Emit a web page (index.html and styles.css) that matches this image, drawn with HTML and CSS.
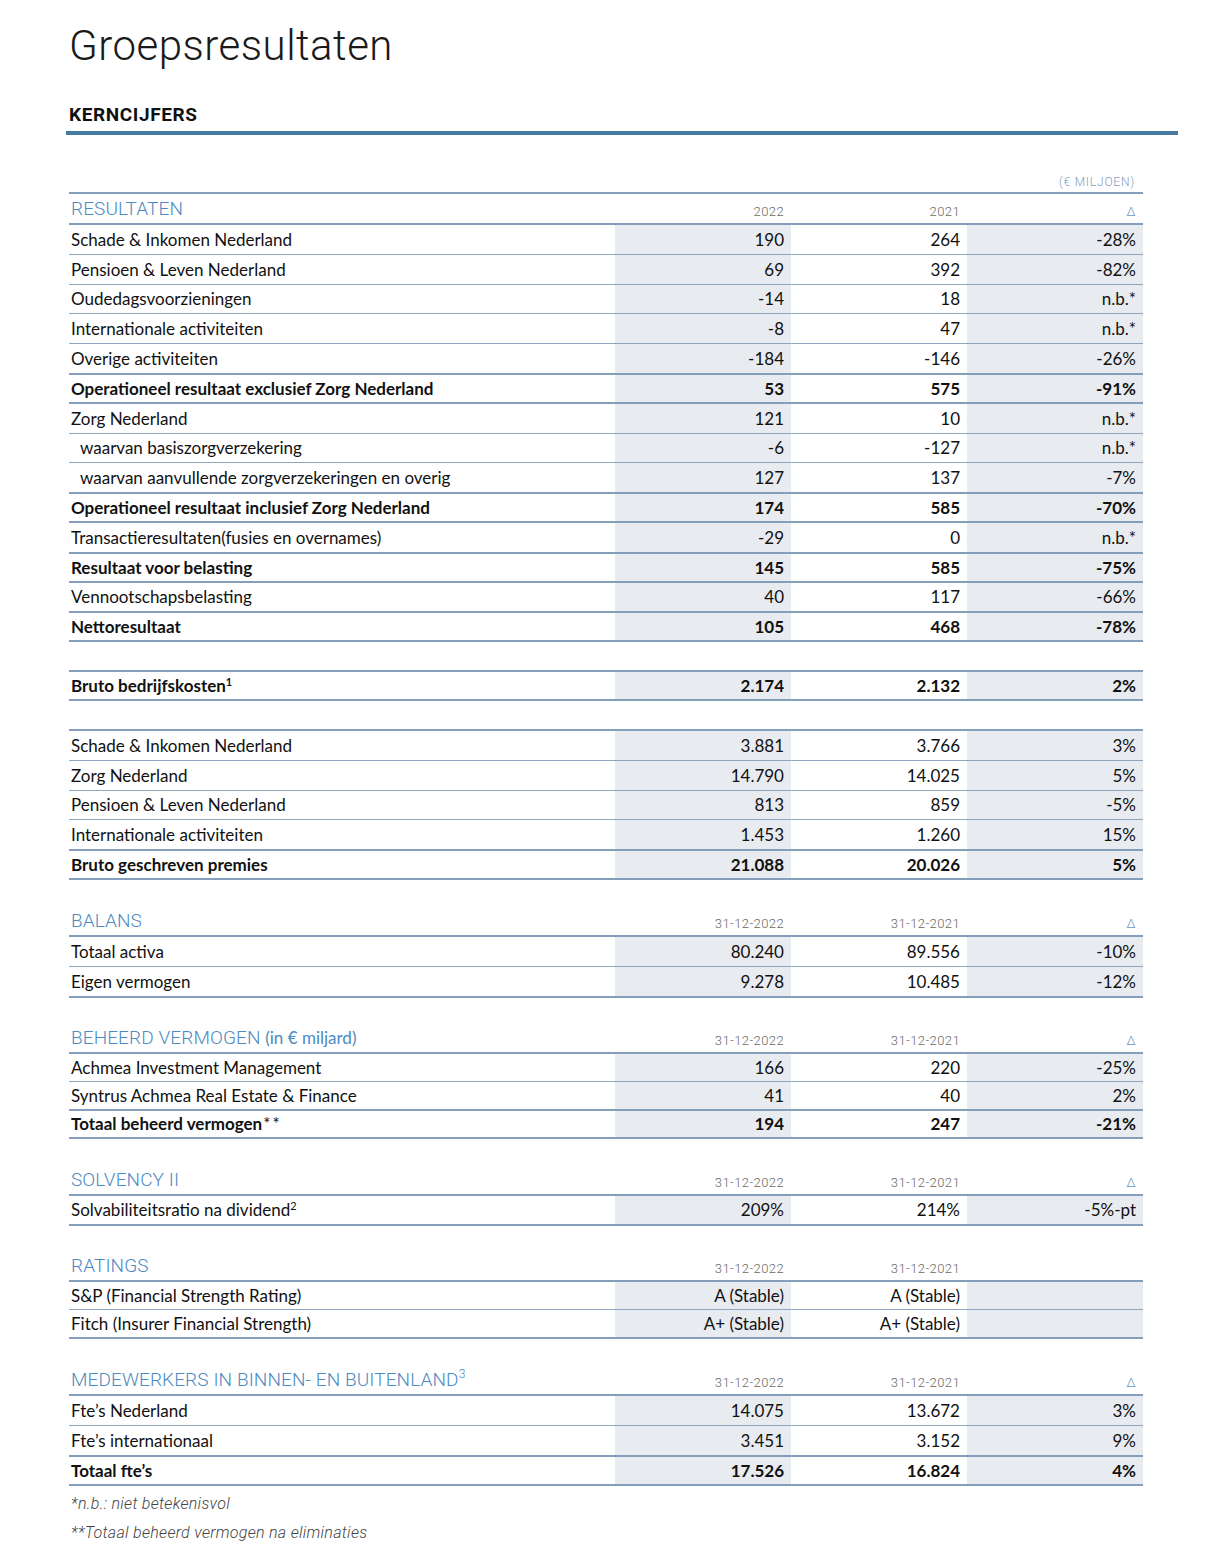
FILE: index.html
```html
<!DOCTYPE html>
<html lang="nl">
<head>
  <meta charset="UTF-8">
  <title>Groepsresultaten</title>
  <link rel="stylesheet" href="styles.css">
</head>
<body>
  <div class="page">
    <h1 class="title">Groepsresultaten</h1>
    <h2 class="subtitle">KERNCIJFERS</h2>
    <div class="bar"></div>

    <div class="unit">(€ MILJOEN)</div>

    <table class="figures first">
      <colgroup><col class="c-label"><col class="c-num"><col class="c-num"><col class="c-num"></colgroup>
      <tr class="head">
        <th class="section">RESULTATEN</th>
        <th class="year">2022</th>
        <th class="year">2021</th>
        <th class="delta">&Delta;</th>
      </tr>
      <tr><td>Schade &amp; Inkomen Nederland</td><td class="num grey">190</td><td class="num">264</td><td class="num grey">-28%</td></tr>
      <tr><td>Pensioen &amp; Leven Nederland</td><td class="num grey">69</td><td class="num">392</td><td class="num grey">-82%</td></tr>
      <tr><td>Oudedagsvoorzieningen</td><td class="num grey">-14</td><td class="num">18</td><td class="num grey">n.b.*</td></tr>
      <tr><td>Internationale activiteiten</td><td class="num grey">-8</td><td class="num">47</td><td class="num grey">n.b.*</td></tr>
      <tr><td>Overige activiteiten</td><td class="num grey">-184</td><td class="num">-146</td><td class="num grey">-26%</td></tr>
      <tr class="total"><td>Operationeel resultaat exclusief Zorg Nederland</td><td class="num grey">53</td><td class="num">575</td><td class="num grey">-91%</td></tr>
      <tr><td>Zorg Nederland</td><td class="num grey">121</td><td class="num">10</td><td class="num grey">n.b.*</td></tr>
      <tr><td class="sub">waarvan basiszorgverzekering</td><td class="num grey">-6</td><td class="num">-127</td><td class="num grey">n.b.*</td></tr>
      <tr><td class="sub">waarvan aanvullende zorgverzekeringen en overig</td><td class="num grey">127</td><td class="num">137</td><td class="num grey">-7%</td></tr>
      <tr class="total"><td>Operationeel resultaat inclusief Zorg Nederland</td><td class="num grey">174</td><td class="num">585</td><td class="num grey">-70%</td></tr>
      <tr><td>Transactieresultaten(fusies en overnames)</td><td class="num grey">-29</td><td class="num">0</td><td class="num grey">n.b.*</td></tr>
      <tr class="total"><td>Resultaat voor belasting</td><td class="num grey">145</td><td class="num">585</td><td class="num grey">-75%</td></tr>
      <tr><td>Vennootschapsbelasting</td><td class="num grey">40</td><td class="num">117</td><td class="num grey">-66%</td></tr>
      <tr class="total last"><td>Nettoresultaat</td><td class="num grey">105</td><td class="num">468</td><td class="num grey">-78%</td></tr>
    </table>

    <table class="figures block">
      <colgroup><col class="c-label"><col class="c-num"><col class="c-num"><col class="c-num"></colgroup>
      <tr class="total"><td>Bruto bedrijfskosten<sup>1</sup></td><td class="num grey">2.174</td><td class="num">2.132</td><td class="num grey">2%</td></tr>
    </table>

    <table class="figures block">
      <colgroup><col class="c-label"><col class="c-num"><col class="c-num"><col class="c-num"></colgroup>
      <tr class="top"><td>Schade &amp; Inkomen Nederland</td><td class="num grey">3.881</td><td class="num">3.766</td><td class="num grey">3%</td></tr>
      <tr><td>Zorg Nederland</td><td class="num grey">14.790</td><td class="num">14.025</td><td class="num grey">5%</td></tr>
      <tr><td>Pensioen &amp; Leven Nederland</td><td class="num grey">813</td><td class="num">859</td><td class="num grey">-5%</td></tr>
      <tr><td>Internationale activiteiten</td><td class="num grey">1.453</td><td class="num">1.260</td><td class="num grey">15%</td></tr>
      <tr class="total last"><td>Bruto geschreven premies</td><td class="num grey">21.088</td><td class="num">20.026</td><td class="num grey">5%</td></tr>
    </table>

    <table class="figures section-table">
      <colgroup><col class="c-label"><col class="c-num"><col class="c-num"><col class="c-num"></colgroup>
      <tr class="head">
        <th class="section">BALANS</th>
        <th class="year">31-12-2022</th>
        <th class="year">31-12-2021</th>
        <th class="delta">&Delta;</th>
      </tr>
      <tr><td>Totaal activa</td><td class="num grey">80.240</td><td class="num">89.556</td><td class="num grey">-10%</td></tr>
      <tr class="last"><td>Eigen vermogen</td><td class="num grey">9.278</td><td class="num">10.485</td><td class="num grey">-12%</td></tr>
    </table>

    <table class="figures section-table compact">
      <colgroup><col class="c-label"><col class="c-num"><col class="c-num"><col class="c-num"></colgroup>
      <tr class="head">
        <th class="section">BEHEERD VERMOGEN <span class="note">(in € miljard)</span></th>
        <th class="year">31-12-2022</th>
        <th class="year">31-12-2021</th>
        <th class="delta">&Delta;</th>
      </tr>
      <tr><td>Achmea Investment Management</td><td class="num grey">166</td><td class="num">220</td><td class="num grey">-25%</td></tr>
      <tr><td>Syntrus Achmea Real Estate &amp; Finance</td><td class="num grey">41</td><td class="num">40</td><td class="num grey">2%</td></tr>
      <tr class="total last"><td>Totaal beheerd vermogen<span class="stars">**</span></td><td class="num grey">194</td><td class="num">247</td><td class="num grey">-21%</td></tr>
    </table>

    <table class="figures section-table">
      <colgroup><col class="c-label"><col class="c-num"><col class="c-num"><col class="c-num"></colgroup>
      <tr class="head">
        <th class="section">SOLVENCY II</th>
        <th class="year">31-12-2022</th>
        <th class="year">31-12-2021</th>
        <th class="delta">&Delta;</th>
      </tr>
      <tr class="last"><td>Solvabiliteitsratio na dividend<sup>2</sup></td><td class="num grey">209%</td><td class="num">214%</td><td class="num grey">-5%-pt</td></tr>
    </table>

    <table class="figures section-table compact">
      <colgroup><col class="c-label"><col class="c-num"><col class="c-num"><col class="c-num"></colgroup>
      <tr class="head">
        <th class="section">RATINGS</th>
        <th class="year">31-12-2022</th>
        <th class="year">31-12-2021</th>
        <th class="delta"></th>
      </tr>
      <tr><td>S&amp;P (Financial Strength Rating)</td><td class="num grey">A (Stable)</td><td class="num">A (Stable)</td><td class="num grey"></td></tr>
      <tr class="last"><td>Fitch (Insurer Financial Strength)</td><td class="num grey">A+ (Stable)</td><td class="num">A+ (Stable)</td><td class="num grey"></td></tr>
    </table>

    <table class="figures section-table">
      <colgroup><col class="c-label"><col class="c-num"><col class="c-num"><col class="c-num"></colgroup>
      <tr class="head">
        <th class="section">MEDEWERKERS IN BINNEN- EN BUITENLAND<sup>3</sup></th>
        <th class="year">31-12-2022</th>
        <th class="year">31-12-2021</th>
        <th class="delta">&Delta;</th>
      </tr>
      <tr><td>Fte’s Nederland</td><td class="num grey">14.075</td><td class="num">13.672</td><td class="num grey">3%</td></tr>
      <tr><td>Fte’s internationaal</td><td class="num grey">3.451</td><td class="num">3.152</td><td class="num grey">9%</td></tr>
      <tr class="total last"><td>Totaal fte’s</td><td class="num grey">17.526</td><td class="num">16.824</td><td class="num grey">4%</td></tr>
    </table>

    <p class="footnote">*n.b.: niet betekenisvol</p>
    <p class="footnote">**Totaal beheerd vermogen na eliminaties</p>
  </div>
</body>
</html>
```

FILE: styles.css
```css
body {
  margin: 0;
  background: #fff;
  color: #111;
  font-family: Lato, "Open Sans", sans-serif;
}
.page {
  width: 1073px;
  margin-left: 69px;
  padding-top: 18px;
}
.title {
  margin: 0;
  font-family: Roboto, "DejaVu Sans", sans-serif;
  font-weight: 300;
  font-size: 42px;
  line-height: 56px;
  letter-spacing: 0.5px;
  color: #1a1a1a;
}
.subtitle {
  margin: 30px 0 0;
  font-family: Roboto, "DejaVu Sans", sans-serif;
  font-weight: 700;
  font-size: 19px;
  line-height: 22px;
  letter-spacing: 0.6px;
  color: #111;
}
.bar {
  height: 4px;
  background: #457aa3;
  margin: 5px 0 0 -3px;
  width: 1112px;
}
.unit {
  text-align: right;
  padding-right: 7px;
  margin-top: 37px;
  font-family: Roboto, "DejaVu Sans", sans-serif;
  font-weight: 300;
  font-size: 12px;
  letter-spacing: 0.8px;
  line-height: 20px;
  color: #7f9cbb;
}
.figures {
  width: 1073px;
  border-collapse: collapse;
  table-layout: fixed;
}
.c-label { width: 546px; }
.c-num { width: 176px; }
.figures td {
  height: 28.8px;
  padding: 0;
  font-size: 17px;
  border-bottom: 1px solid #8ea6c0;
  white-space: nowrap;
}
.figures td:first-child {
  padding-left: 2px;
}
.figures td.sub {
  padding-left: 11px;
}
.figures td.num {
  text-align: right;
  padding-right: 7px;
}
.figures td.grey {
  background: #e8ebf0;
}
.figures tr.total td {
  height: 26.8px;
  font-weight: 700;
  border-top: 2px solid #839fbc;
  border-bottom: 2px solid #839fbc;
}
.figures tr.last td {
  border-bottom: 2px solid #839fbc;
}
.figures tr.top td {
  border-top: 2px solid #839fbc;
}
.figures.first tr.head th {
  border-top: 2px solid #839fbc;
}
.figures th {
  height: 25px;
  padding: 0 0 4px;
  vertical-align: bottom;
  font-weight: 400;
  border-bottom: 2px solid #839fbc;
  white-space: nowrap;
}
.figures.section-table th {
  height: 26px;
}
.figures th.section {
  text-align: left;
  padding-left: 2px;
  padding-bottom: 3px;
  font-family: Roboto, "DejaVu Sans", sans-serif;
  font-weight: 300;
  font-size: 19px;
  letter-spacing: 0.1px;
  color: #4d8ac2;
}
.figures th.section sup {
  font-size: 12px;
  vertical-align: 8px;
  line-height: 0;
}
.figures th.section .note {
  font-family: Lato, "Open Sans", sans-serif;
  font-weight: 400;
  font-size: 17px;
  letter-spacing: 0;
}
.figures th.year,
.figures th.delta {
  text-align: right;
  padding-right: 7px;
  font-family: Roboto, "DejaVu Sans", sans-serif;
  font-weight: 300;
  font-size: 13px;
  letter-spacing: 0.4px;
  color: #6a6a6a;
}
.figures th.delta {
  color: #6d95bf;
}
.figures sup {
  font-size: 11px;
  vertical-align: 6px;
  line-height: 0;
}
.stars {
  letter-spacing: 2px;
  font-weight: 400;
  margin-left: 1px;
}
.figures.block {
  margin-top: 28px;
}
.figures.section-table {
  margin-top: 25px;
}
.figures.section-table.compact {
  margin-top: 24px;
}
.figures.compact td {
  height: 27px;
}
.figures.compact tr.total td {
  height: 26px;
}
.footnote {
  margin: 0;
  padding-left: 2px;
  font-family: Roboto, "DejaVu Sans", sans-serif;
  font-weight: 300;
  font-style: italic;
  font-size: 16px;
  letter-spacing: 0.3px;
  line-height: 29px;
  color: #444;
}
.figures + .footnote {
  margin-top: 3px;
}
```
